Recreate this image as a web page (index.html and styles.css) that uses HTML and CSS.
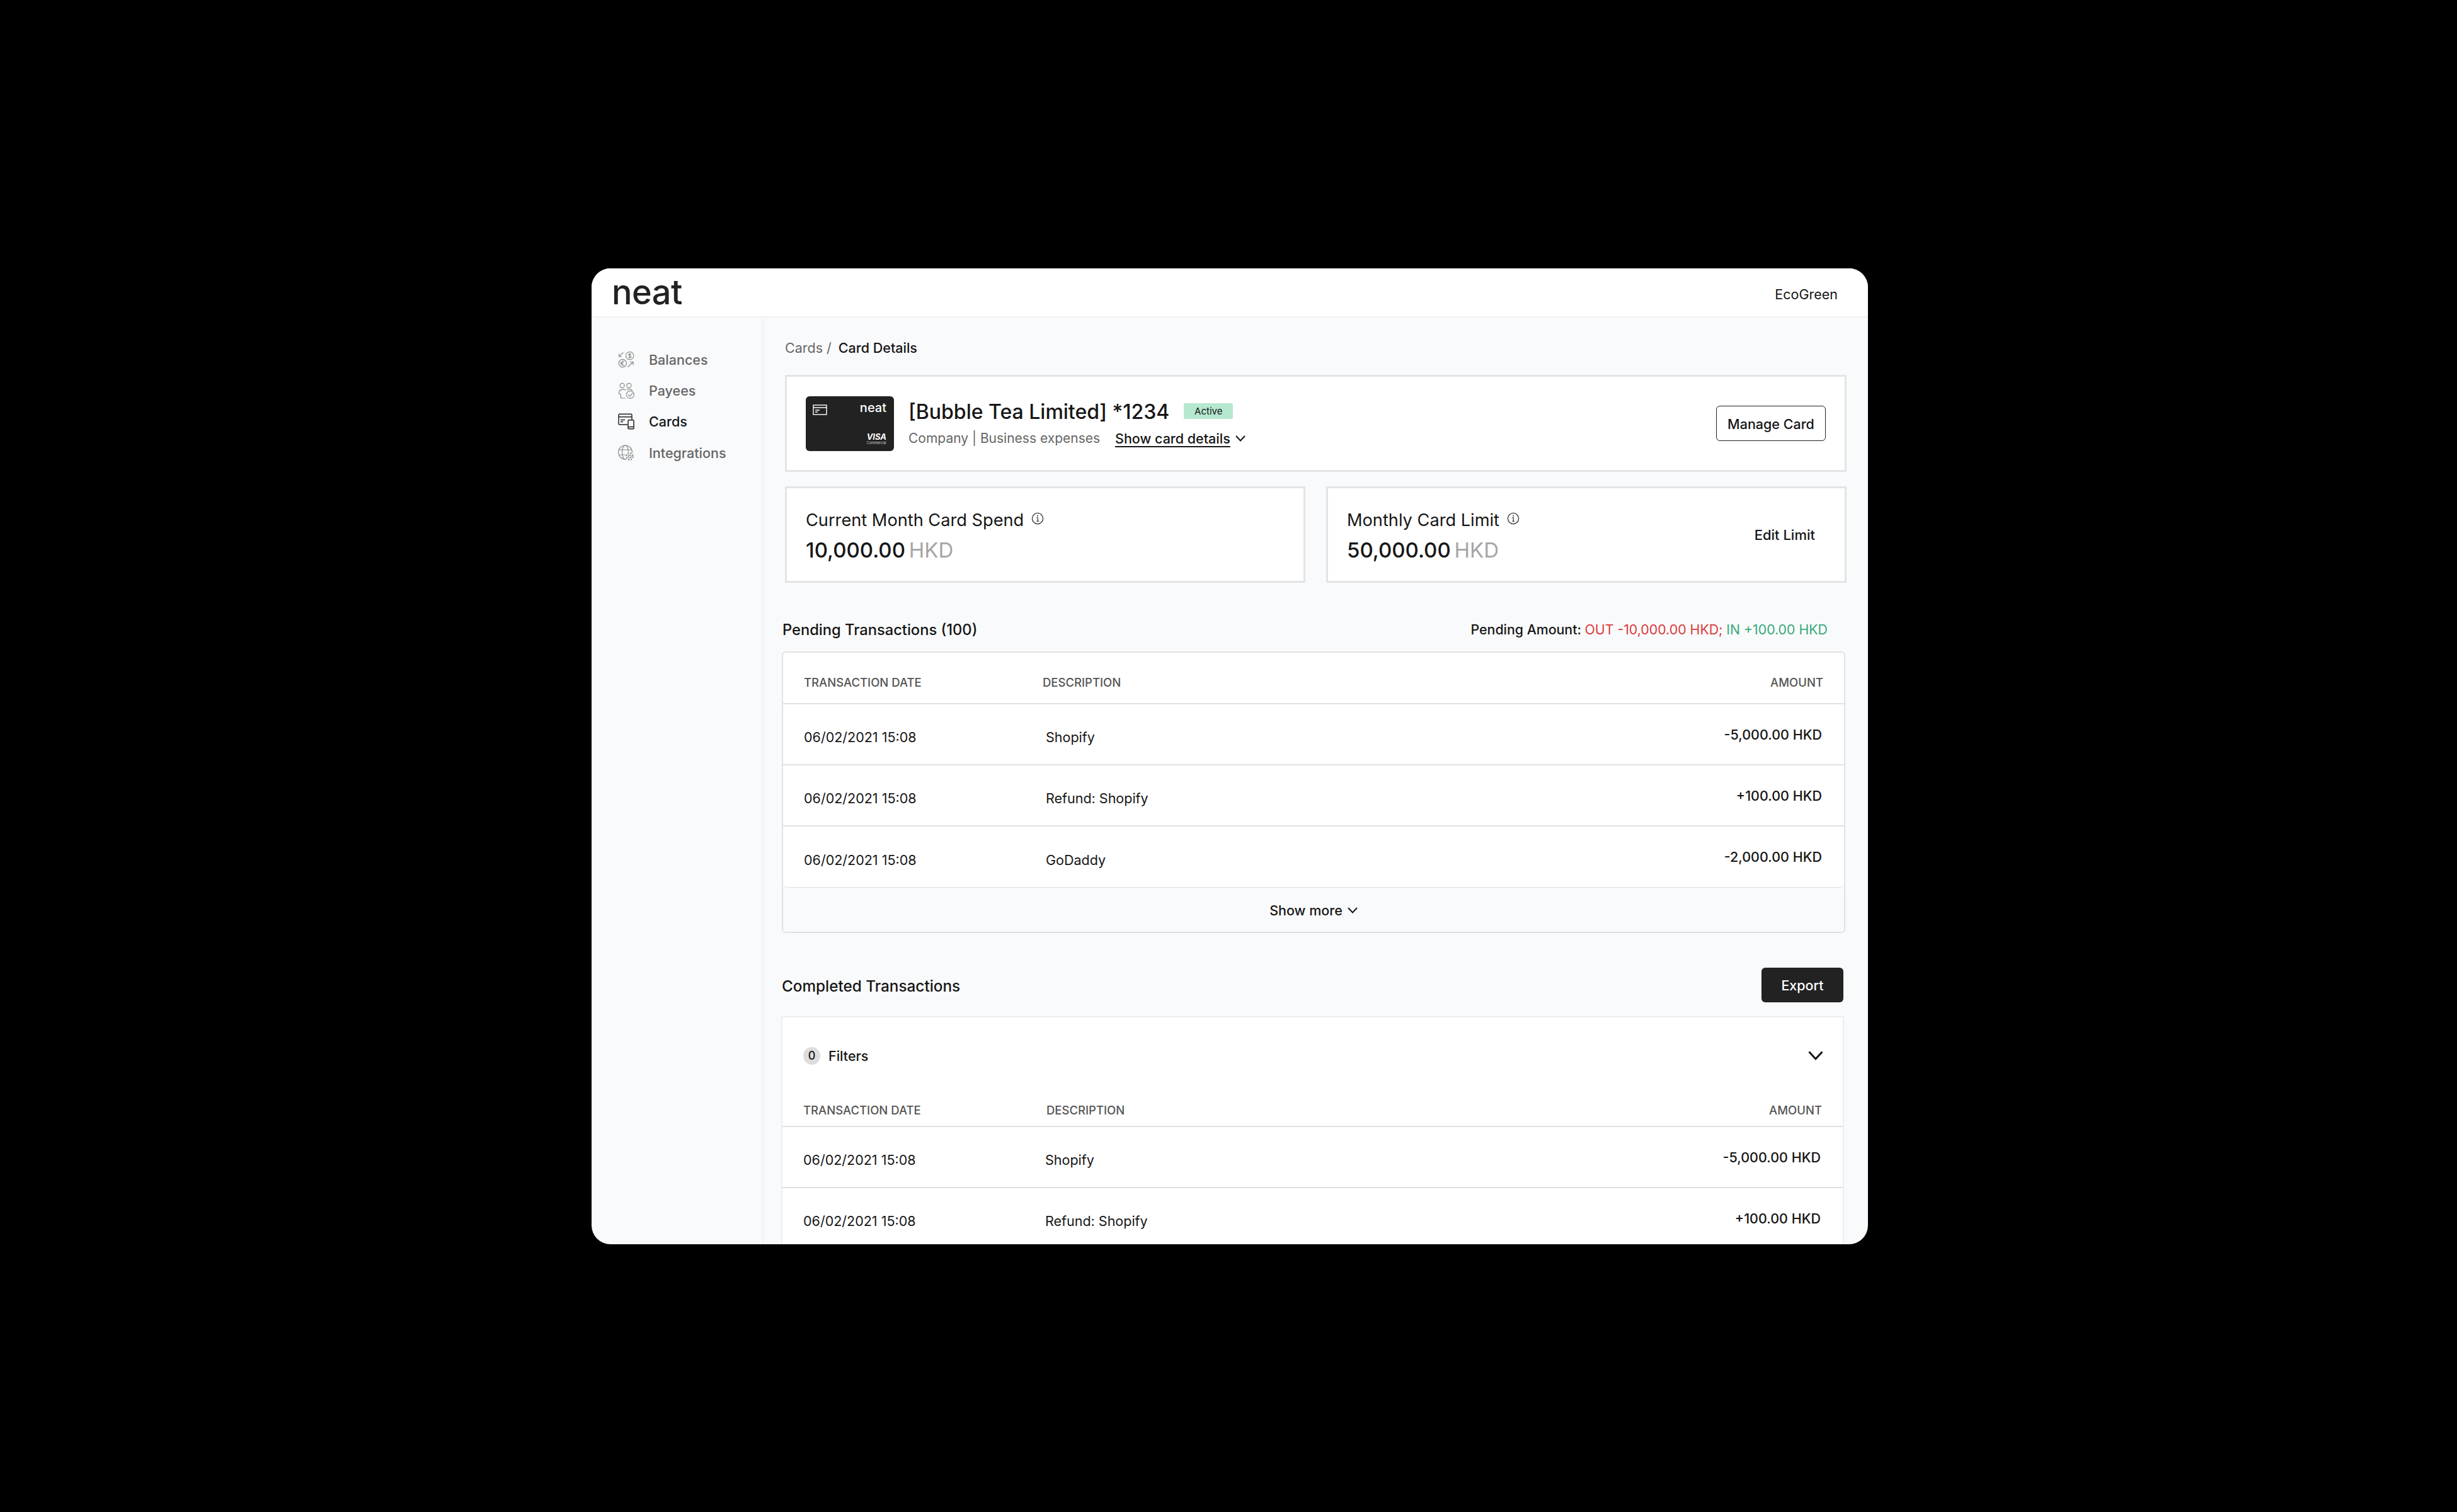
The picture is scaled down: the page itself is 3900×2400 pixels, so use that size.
FILE: index.html
```html
<!DOCTYPE html>
<html lang="en">
<head>
    <meta charset="UTF-8">
    <title>neat - Card Details</title>
    <link rel="stylesheet" href="styles.css">
</head>
<body>
    <svg class="sprite" width="0" height="0">
        <symbol id="chevron" viewBox="0 0 16 10">
            <path d="M1 1l7 7.5L15 1" fill="none" stroke="currentColor"/>
        </symbol>
        <symbol id="info" viewBox="0 0 20 20">
            <circle cx="10" cy="10" r="8.6" fill="none" stroke="#333" stroke-width="1.3"/>
            <path d="M8.4 8.6H10.2V14.4M8.4 14.4H12" fill="none" stroke="#333" stroke-width="1.2"/>
            <circle cx="10" cy="5.8" r="1" fill="#333"/>
        </symbol>
    </svg>

    <div class="window">
        <header class="topbar">
            <div class="logo">neat</div>
            <div class="company">EcoGreen</div>
        </header>

        <div class="layout">
            <nav class="sidebar">
                <a class="nav-item">
                    <svg class="nav-icon" viewBox="0 0 26 26" fill="none" stroke="#8c8c8c" stroke-width="1.2">
                        <circle cx="18.7" cy="6.7" r="6.2"/>
                        <circle cx="7.3" cy="18.6" r="6.2"/>
                        <path d="M8.5 1.5L1.5 8M1.5 3.5V8H6M15.5 24.5L24 16.5M19 16.5H24V21.5"/>
                        <path d="M21 4.6C20.4 3.6 16.8 3.4 16.8 5.2S21 7 21 8.6 17 10.4 16.4 9M18.7 2.6V11"/>
                        <path d="M10 15.6C7.5 14.5 5 16 5 18.6S7.5 22.6 10 21.6M3.6 17.6H8.6M3.6 19.6H8"/>
                    </svg>
                    <span>Balances</span>
                </a>
                <a class="nav-item">
                    <svg class="nav-icon" viewBox="0 0 26 26" fill="none" stroke="#8c8c8c" stroke-width="1.2">
                        <circle cx="6.6" cy="5" r="3.6"/>
                        <circle cx="17.4" cy="5" r="3.6"/>
                        <path d="M12 12.5C9.5 10.5 3 10.5 1.5 15V18L4.5 19V25H11.5"/>
                        <path d="M13.5 11.5C16 10 21 10.5 23 13"/>
                        <circle cx="19.4" cy="19.4" r="6"/>
                        <path d="M16.4 19.4L18.8 22L23.4 16.6"/>
                    </svg>
                    <span>Payees</span>
                </a>
                <a class="nav-item active">
                    <svg class="nav-icon" viewBox="0 0 26 26" fill="none" stroke="#222" stroke-width="1.5">
                        <path d="M15 18H2.5C1.6 18 1 17.4 1 16.5V2.7C1 1.8 1.6 1.2 2.5 1.2H20.5C21.4 1.2 22 1.8 22 2.7V10"/>
                        <path d="M1 5.8H22M4 10.4H11M4 13.6H8"/>
                        <rect x="16" y="10.8" width="9" height="14" rx="1"/>
                        <path d="M16 21.6H25"/>
                    </svg>
                    <span>Cards</span>
                </a>
                <a class="nav-item">
                    <svg class="nav-icon" viewBox="0 0 26 26" fill="none" stroke="#8c8c8c" stroke-width="1.2">
                        <circle cx="11.5" cy="12" r="11"/>
                        <ellipse cx="11.5" cy="12" rx="5" ry="11"/>
                        <path d="M1 8H22M1 16H12"/>
                        <circle cx="18.5" cy="18.5" r="7.2" fill="#f9fafb" stroke="none"/>
                        <circle cx="18.5" cy="18.5" r="5.2" stroke-width="2.4" stroke-dasharray="2.2 1.9"/>
                        <circle cx="18.5" cy="18.5" r="2.2"/>
                    </svg>
                    <span>Integrations</span>
                </a>
            </nav>

            <main class="main">
                <div class="crumbs"><span class="crumb-parent">Cards /</span><span class="crumb-current">Card Details</span></div>

                <section class="panel card-head">
                    <div class="card-thumb">
                        <svg class="thumb-icon" viewBox="0 0 23 17" fill="none" stroke="#fff" stroke-width="1.4">
                            <rect x="1" y="1" width="21" height="15"/>
                            <path d="M1 5H22M4 9H11M4 12H8"/>
                        </svg>
                        <div class="thumb-right">
                            <div class="thumb-logo">neat</div>
                            <div class="thumb-visa">
                                <div class="visa">VISA</div>
                                <div class="visa-sub">Commercial</div>
                            </div>
                        </div>
                    </div>
                    <div class="card-info">
                        <div class="card-title-row">
                            <h1 class="card-title">[Bubble Tea Limited] *1234</h1>
                            <span class="badge">Active</span>
                        </div>
                        <div class="card-sub-row">
                            <span class="card-sub">Company | Business expenses</span>
                            <a class="details-link">Show card details</a>
                            <svg class="chev-small"><use href="#chevron"/></svg>
                        </div>
                    </div>
                    <button class="btn-outline">Manage Card</button>
                </section>

                <div class="stats">
                    <section class="panel stat">
                        <div>
                            <div class="stat-label">Current Month Card Spend <svg class="info"><use href="#info"/></svg></div>
                            <div class="stat-value">10,000.00 <span class="currency">HKD</span></div>
                        </div>
                    </section>
                    <section class="panel stat">
                        <div>
                            <div class="stat-label">Monthly Card Limit <svg class="info"><use href="#info"/></svg></div>
                            <div class="stat-value">50,000.00 <span class="currency">HKD</span></div>
                        </div>
                        <a class="edit-link">Edit Limit</a>
                    </section>
                </div>

                <div class="section-head pending-head">
                    <h2>Pending Transactions (100)</h2>
                    <div class="pending-total">Pending Amount: <span class="out">OUT -10,000.00 HKD;</span> <span class="in">IN +100.00 HKD</span></div>
                </div>

                <div class="table pending">
                    <div class="row head">
                        <div class="date">TRANSACTION DATE</div>
                        <div class="desc">DESCRIPTION</div>
                        <div class="amount">AMOUNT</div>
                    </div>
                    <div class="row">
                        <div class="date">06/02/2021 15:08</div>
                        <div class="desc">Shopify</div>
                        <div class="amount">-5,000.00 HKD</div>
                    </div>
                    <div class="row">
                        <div class="date">06/02/2021 15:08</div>
                        <div class="desc">Refund: Shopify</div>
                        <div class="amount">+100.00 HKD</div>
                    </div>
                    <div class="row last">
                        <div class="date">06/02/2021 15:08</div>
                        <div class="desc">GoDaddy</div>
                        <div class="amount">-2,000.00 HKD</div>
                    </div>
                    <div class="show-more">Show more <svg class="chev-small"><use href="#chevron"/></svg></div>
                </div>

                <div class="section-head completed-head">
                    <h2>Completed Transactions</h2>
                    <button class="btn-dark">Export</button>
                </div>

                <div class="table completed">
                    <div class="filters">
                        <span class="filter-count">0</span>
                        <span class="filter-label">Filters</span>
                        <svg class="chev-large"><use href="#chevron"/></svg>
                    </div>
                    <div class="row head">
                        <div class="date">TRANSACTION DATE</div>
                        <div class="desc">DESCRIPTION</div>
                        <div class="amount">AMOUNT</div>
                    </div>
                    <div class="row">
                        <div class="date">06/02/2021 15:08</div>
                        <div class="desc">Shopify</div>
                        <div class="amount">-5,000.00 HKD</div>
                    </div>
                    <div class="row">
                        <div class="date">06/02/2021 15:08</div>
                        <div class="desc">Refund: Shopify</div>
                        <div class="amount">+100.00 HKD</div>
                    </div>
                </div>
            </main>
        </div>
    </div>
</body>
</html>
```

FILE: styles.css
```css
/* Global */
* {
    box-sizing: border-box;
}

body {
    margin: 0;
    height: 2400px;
    background-color: #000;
    font-family: 'Inter', 'Liberation Sans', sans-serif;
    color: #161616;
    overflow: hidden;
}

.sprite {
    display: block;
}

h1, h2 {
    margin: 0;
    font-weight: 500;
}

button {
    font-family: inherit;
}

/* Window */
.window {
    width: 2026px;
    height: 1549px;
    margin: 426px 0 0 939px;
    background-color: #f9fafb;
    border-radius: 30px;
    overflow: hidden;
}

.topbar {
    height: 78px;
    padding: 0 48px 0 32px;
    display: flex;
    justify-content: space-between;
    align-items: center;
    background-color: #fff;
    border-bottom: 2px solid #f0f1f2;
}

.logo {
    font-size: 54px;
    font-weight: 500;
    letter-spacing: -0.5px;
    line-height: 1;
    color: #222;
}

.company {
    font-size: 21.5px;
    padding-top: 6px;
}

.layout {
    display: flex;
}

/* Sidebar */
.sidebar {
    width: 273px;
    flex-shrink: 0;
    height: 1471px;
    padding: 42px 0 0 42px;
    border-right: 2px solid #f0f1f2;
}

.nav-item {
    height: 49.3px;
    display: flex;
    align-items: center;
    gap: 23px;
    font-size: 21.5px;
    font-weight: 500;
    color: #666;
}

.nav-item.active {
    color: #161616;
}

.nav-icon {
    width: 26px;
    height: 26px;
    flex-shrink: 0;
}

/* Main column */
.main {
    flex: 1;
    min-width: 0;
    padding: 0 34px 0 28px;
}

.crumbs {
    height: 91px;
    padding: 35px 0 0 6px;
    font-size: 21.5px;
    line-height: 26px;
    display: flex;
    gap: 11px;
}

.crumb-parent {
    color: #666;
}

.crumb-current {
    font-weight: 500;
}

.panel {
    margin-left: 6px;
    background-color: #fff;
    border: 3px solid #e3e4e6;
}

.card-head {
    height: 154px;
    padding: 0 30px 0 30px;
    display: flex;
    align-items: center;
}

.card-thumb {
    width: 140px;
    height: 87px;
    padding: 13px 12px 9px 11px;
    border-radius: 6px;
    background-color: #222;
    color: #fff;
    display: flex;
    justify-content: space-between;
}

.thumb-icon {
    width: 23px;
    height: 17px;
}

.thumb-right {
    margin-top: -4px;
    display: flex;
    flex-direction: column;
    justify-content: space-between;
    align-items: flex-end;
}

.thumb-logo {
    font-size: 20px;
    font-weight: 500;
    line-height: 18px;
}

.visa {
    font-size: 13px;
    font-weight: 700;
    font-style: italic;
    line-height: 13px;
    text-align: right;
}

.visa-sub {
    font-size: 5.5px;
    line-height: 7px;
    color: #ccc;
}

.card-info {
    flex: 1;
    margin-left: 23px;
}

.card-title-row {
    display: flex;
    align-items: center;
    gap: 23px;
    height: 42px;
    margin-top: -1px;
}

.card-title {
    font-size: 32px;
    font-weight: 500;
    line-height: 42px;
}

.badge {
    width: 78px;
    height: 25px;
    margin-top: -3px;
    border-radius: 2px;
    background-color: #b5e8cf;
    font-size: 15px;
    line-height: 25px;
    text-align: center;
}

.card-sub-row {
    display: flex;
    align-items: center;
    height: 30px;
    margin-top: 6px;
}

.card-sub {
    width: 328px;
    font-size: 21px;
    color: #666;
}

.details-link {
    font-size: 21.5px;
    font-weight: 500;
    text-decoration: underline;
    text-underline-offset: 4px;
}

.chev-small {
    width: 16px;
    height: 10px;
    margin-left: 8px;
    stroke-width: 2px;
}

.btn-outline {
    width: 174px;
    height: 56px;
    padding: 2px 0 0;
    background-color: #fff;
    border: 1.5px solid #222;
    border-radius: 6px;
    font-size: 21.5px;
    font-weight: 500;
    color: #161616;
}

.stats {
    display: flex;
    gap: 33px;
    margin-top: 23px;
}

.stat {
    flex: 1;
    height: 153px;
    padding: 4px 47px 0 30px;
    display: flex;
    justify-content: space-between;
    align-items: center;
}

.stats .stat + .stat {
    margin-left: 0;
}

.stat-label {
    font-size: 27.2px;
    line-height: 36px;
    display: flex;
    align-items: center;
    gap: 12px;
}

.info {
    width: 20px;
    height: 20px;
    margin-top: -6px;
}

.stat-value {
    margin-top: 9px;
    font-size: 33px;
    font-weight: 500;
    line-height: 40px;
}

.currency {
    margin-left: -3px;
    color: #a5a5a5;
    font-weight: 400;
}

.edit-link {
    font-size: 22px;
    font-weight: 500;
    padding-bottom: 3px;
}

/* Transactions */
.section-head {
    display: flex;
    justify-content: space-between;
    align-items: center;
}

.section-head h2 {
    font-size: 24px;
}

.pending-head {
    height: 50px;
    margin: 49px 30px 10px 2px;
}

.pending-head h2 {
    font-size: 23.7px;
}

.pending-total {
    font-size: 21.3px;
    font-weight: 500;
}

.out {
    color: #dc3a3e;
    font-weight: 400;
}

.in {
    color: #38ab7c;
    font-weight: 400;
}

.table {
    background-color: #fff;
}

.pending {
    height: 447px;
    margin: 0 2px 0 1px;
    border: 2px solid #dfe1e3;
    border-radius: 6px;
    overflow: hidden;
}

.row {
    height: 97px;
    padding: 9px 35px 0 33px;
    display: flex;
    align-items: center;
    border-bottom: 2px solid #dfe1e3;
    font-size: 21.5px;
}

.row.head {
    height: 82px;
    padding: 13px 33px 0 33px;
    color: #555;
    font-size: 18.5px;
    font-weight: 500;
}

.row.last {
    border-radius: 6px;
    border-bottom-width: 1px;
}

.date {
    width: 384px;
    flex-shrink: 0;
}

.head .date {
    width: 379px;
}

.amount {
    margin-left: auto;
    padding-bottom: 9px;
    font-weight: 500;
}

.head .amount {
    padding-bottom: 0;
    font-weight: 500;
}

.show-more {
    height: 72px;
    display: flex;
    justify-content: center;
    align-items: center;
    background-color: #f9fafb;
    font-size: 21.5px;
    font-weight: 500;
}

.completed-head {
    height: 55px;
    margin: 55px 5px 22px 1px;
}

.completed-head h2 {
    font-size: 24.3px;
    padding-top: 2px;
}

.btn-dark {
    width: 130px;
    height: 55px;
    padding: 0;
    border: none;
    border-radius: 6px;
    background-color: #222;
    color: #fff;
    font-size: 21.5px;
    font-weight: 500;
}

.completed {
    margin-right: 4px;
    border: 2px solid #eceef0;
    border-bottom: none;
}

.filters {
    height: 121px;
    padding: 0 31px 0 33px;
    display: flex;
    align-items: center;
}

.filter-count {
    width: 27px;
    height: 28px;
    border-radius: 50%;
    background-color: #ddd;
    font-size: 18px;
    font-weight: 500;
    line-height: 28px;
    text-align: center;
}

.filter-label {
    margin-left: 13px;
    font-size: 21.5px;
    font-weight: 500;
}

.chev-large {
    width: 24px;
    height: 15px;
    margin-left: auto;
    stroke-width: 2px;
}

.completed .row.head {
    height: 53px;
    padding-top: 1px;
}

.completed .date {
    width: 384px;
}

.completed .head .date {
    width: 386px;
}
```
